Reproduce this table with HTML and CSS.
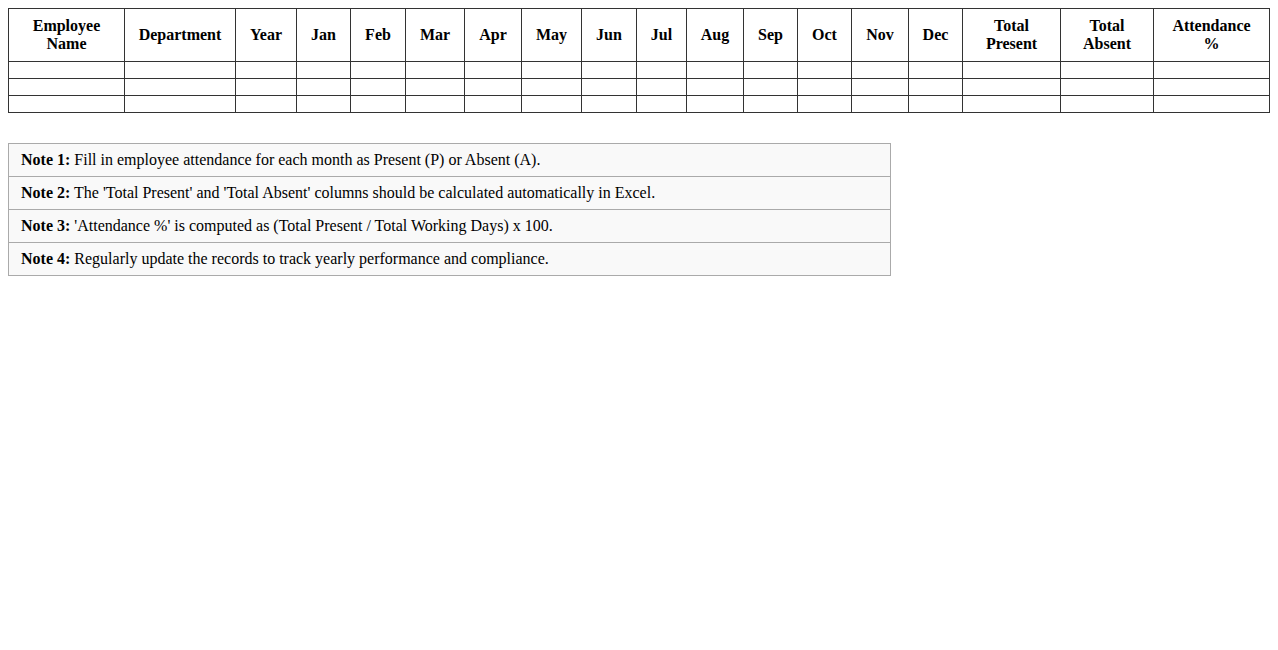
FILE: index.html
```html
<!DOCTYPE html>
<html>
<head>
<meta charset="utf-8">
<link rel="stylesheet" href="styles.css">
</head>
<body>
<table class="sheet">
  <colgroup>
    <col class="c-name">
    <col class="c-dept">
    <col class="c-year">
    <col class="c-jan">
    <col class="c-feb">
    <col class="c-mar">
    <col class="c-apr">
    <col class="c-may">
    <col class="c-jun">
    <col class="c-jul">
    <col class="c-aug">
    <col class="c-sep">
    <col class="c-oct">
    <col class="c-nov">
    <col class="c-dec">
    <col class="c-present">
    <col class="c-absent">
    <col class="c-pct">
  </colgroup>
  <thead>
    <tr>
      <th>Employee<br>Name</th>
      <th>Department</th>
      <th>Year</th>
      <th>Jan</th>
      <th>Feb</th>
      <th>Mar</th>
      <th>Apr</th>
      <th>May</th>
      <th>Jun</th>
      <th>Jul</th>
      <th>Aug</th>
      <th>Sep</th>
      <th>Oct</th>
      <th>Nov</th>
      <th>Dec</th>
      <th>Total<br>Present</th>
      <th>Total<br>Absent</th>
      <th>Attendance<br>%</th>
    </tr>
  </thead>
  <tbody>
    <tr><td></td><td></td><td></td><td></td><td></td><td></td><td></td><td></td><td></td><td></td><td></td><td></td><td></td><td></td><td></td><td></td><td></td><td></td></tr>
    <tr><td></td><td></td><td></td><td></td><td></td><td></td><td></td><td></td><td></td><td></td><td></td><td></td><td></td><td></td><td></td><td></td><td></td><td></td></tr>
    <tr><td></td><td></td><td></td><td></td><td></td><td></td><td></td><td></td><td></td><td></td><td></td><td></td><td></td><td></td><td></td><td></td><td></td><td></td></tr>
  </tbody>
</table>
<div class="notes">
  <div class="note"><b>Note 1:</b> Fill in employee attendance for each month as Present (P) or Absent (A).</div>
  <div class="note"><b>Note 2:</b> The 'Total Present' and 'Total Absent' columns should be calculated automatically in Excel.</div>
  <div class="note"><b>Note 3:</b> 'Attendance %' is computed as (Total Present / Total Working Days) x 100.</div>
  <div class="note"><b>Note 4:</b> Regularly update the records to track yearly performance and compliance.</div>
</div>
</body>
</html>
```
FILE: styles.css
```css
body {
  margin: 8px;
  font-family: "Liberation Serif", "Times New Roman", serif;
  font-size: 16px;
  line-height: 18px;
  color: #000;
  background: #fff;
}
.sheet {
  width: 100%;
  border-collapse: collapse;
  table-layout: fixed;
}
.c-name { width: 116px; }
.c-dept { width: 111px; }
.c-year { width: 61px; }
.c-jan { width: 54px; }
.c-feb { width: 55px; }
.c-mar { width: 59px; }
.c-apr { width: 57px; }
.c-may { width: 60px; }
.c-jun { width: 55px; }
.c-jul { width: 50px; }
.c-aug { width: 57px; }
.c-sep { width: 54px; }
.c-oct { width: 54px; }
.c-nov { width: 57px; }
.c-dec { width: 54px; }
.c-present { width: 98px; }
.c-absent { width: 93px; }
.c-pct { width: 116px; }
.sheet th,
.sheet td {
  border: 1px solid #333;
  padding: 8px;
  text-align: center;
}
.sheet th {
  font-weight: bold;
}
.notes {
  box-sizing: border-box;
  width: 70%;
  margin-top: 30px;
  border: 1px solid #aaa;
  background: #f9f9f9;
}
.note {
  padding: 7px 12px;
  border-bottom: 1px solid #aaa;
}
.note:last-child {
  border-bottom: none;
}
```
